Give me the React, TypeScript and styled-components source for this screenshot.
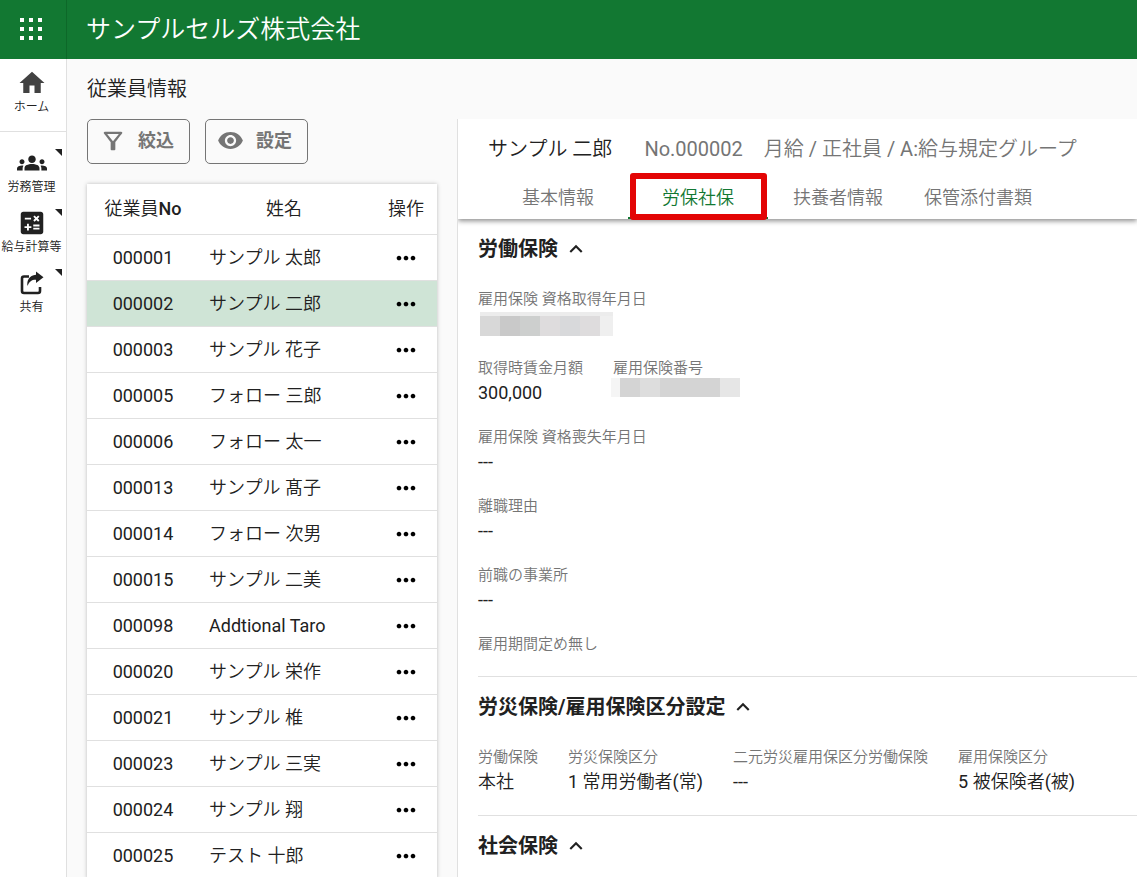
import React from "react";
import styled, { createGlobalStyle } from "styled-components";
import {
  MdCalculate,
  MdGroups,
  MdHome,
  MdKeyboardArrowUp,
  MdMoreHoriz,
  MdOutlineFilterAlt,
  MdVisibility,
} from "react-icons/md";

const green = "#127832";
const ink = "#212121";
const muted = "#757575";
const line = "#e0e0e0";
const boldFont = `Roboto, "Noto Sans CJK JP", sans-serif`;

const GlobalStyle = createGlobalStyle`
  * { box-sizing: border-box; }
  body {
    margin: 0;
    background: #fafafa;
    color: ${ink};
    font-family: Roboto, "Noto Sans CJK JP DemiLight", "Noto Sans CJK JP Light", "Noto Sans CJK JP", sans-serif;
    font-size: 18px;
    line-height: 24px;
  }
  button { font: inherit; color: inherit; background: none; border: 0; padding: 0; cursor: pointer; }
  h1, h2, h3, dl, dd, p { margin: 0; font-weight: 400; }
`;

const Shell = styled.div`
  display: flex;
  flex-direction: column;
  height: 100vh;
  overflow: hidden;
`;

const TopBar = styled.header`
  display: flex;
  flex: none;
  height: 59px;
  background: ${green};
  color: #fff;
`;

const AppsButton = styled.button`
  display: flex;
  align-items: center;
  justify-content: center;
  width: 67px;
  padding: 0 4px 1px 0;
  border-right: 1px solid #0d6829;
`;

const Company = styled.h1`
  padding-left: 19px;
  font-size: 25px;
  line-height: 59px;
`;

const Body = styled.div`
  display: flex;
  flex: 1;
  min-height: 0;
`;

const Rail = styled.nav`
  flex: none;
  width: 67px;
  background: #fff;
  border-right: 1px solid ${line};
`;

const RailGroup = styled.div`
  padding-top: 9px;
  & + & {
    padding-top: 16px;
    border-top: 1px solid ${line};
  }
  &:first-child {
    height: 72px;
  }
`;

const RailItem = styled.button`
  position: relative;
  display: flex;
  flex-direction: column;
  align-items: center;
  width: 100%;
  height: 60px;
  padding-right: 3px;
  font-size: 12px;
  line-height: 18px;
  white-space: nowrap;
`;

const Corner = styled.span`
  position: absolute;
  top: 1px;
  right: 4px;
  border-top: 7px solid ${ink};
  border-left: 7px solid transparent;
`;

const ListPane = styled.main`
  flex: none;
  width: 390px;
  padding: 16px 20px 0;
`;

const PageTitle = styled.h2`
  font-size: 20px;
  line-height: 28px;
`;

const Actions = styled.div`
  display: flex;
  gap: 15px;
  margin: 16px 0 20px;
`;

const ActionButton = styled.button`
  display: flex;
  align-items: center;
  justify-content: space-between;
  width: 103px;
  height: 45px;
  padding: 0 15px 2px 11px;
  border: 1px solid ${muted};
  border-radius: 5px;
  color: ${muted};
  font-family: ${boldFont};
  font-weight: 700;
`;

const Table = styled.table`
  width: 100%;
  table-layout: fixed;
  border-collapse: separate;
  border-spacing: 0;
  background: #fff;
  box-shadow: 0 0 4px rgba(0, 0, 0, 0.25);
`;

const HeadCell = styled.th<{ $width?: number; $indent?: number }>`
  width: ${(p) => (p.$width ? `${p.$width}px` : "auto")};
  height: 51px;
  padding: 0 0 0 ${(p) => p.$indent ?? 0}px;
  border-bottom: 1px solid ${line};
  font-weight: 400;
  b { font-weight: 500; }
`;

const Row = styled.tr<{ $selected: boolean }>`
  background: ${(p) => (p.$selected ? "#cfe4d6" : "#fff")};
`;

const Cell = styled.td<{ $align?: string; $indent?: number }>`
  height: 46px;
  padding: 0 0 0 ${(p) => p.$indent ?? 0}px;
  border-bottom: 1px solid ${line};
  text-align: ${(p) => p.$align ?? "left"};
`;

const RowMenu = styled.button`
  display: block;
  width: 28px;
  height: 28px;
  margin: 0 auto;
  color: #000;
  svg { display: block; }
`;

const Detail = styled.section`
  flex: 1;
  min-width: 0;
  margin-top: 60px;
  background: #fff;
  border-left: 1px solid ${line};
`;

const DetailHead = styled.header`
  height: 100px;
  padding-left: 30px;
  box-shadow: 0 2px 5px rgba(0, 0, 0, 0.45);
  clip-path: inset(0 0 -12px 0);
`;

const Person = styled.div`
  display: flex;
  gap: 21px;
  padding: 15px 0 11px;
  font-size: 20px;
  line-height: 30px;
  white-space: nowrap;
  color: ${muted};
`;

const PersonName = styled.h2`
  margin-right: 11px;
  font-size: 20px;
  color: ${ink};
`;

const Tabs = styled.div`
  display: flex;
`;

const Tab = styled.button<{ $active: boolean }>`
  position: relative;
  width: 140px;
  height: 44px;
  padding-top: 4px;
  border-bottom: 2px solid ${(p) => (p.$active ? green : "transparent")};
  color: ${(p) => (p.$active ? green : muted)};
  white-space: nowrap;
`;

const Highlight = styled.span`
  position: absolute;
  inset: -2px 1px -3px 2px;
  border: 6px solid #e30505;
  border-radius: 3px;
`;

const Sections = styled.div`
  padding-left: 20px;
`;

const Section = styled.section`
  padding: 15px 0 21px;
  & + & {
    border-top: 1px solid ${line};
  }
`;

const SectionTitle = styled.h3`
  margin-bottom: 24px;
  font-size: 20px;
  line-height: 30px;
`;

const Toggle = styled.button`
  display: flex;
  align-items: center;
  gap: 5px;
  font-family: ${boldFont};
  font-weight: 700;
`;

const Fields = styled.dl`
  display: flex;
  gap: 30px;
  & + & {
    margin-top: 21px;
  }
`;

const Label = styled.dt`
  font-size: 15px;
  line-height: 22px;
  color: ${muted};
  white-space: nowrap;
`;

const Value = styled.dd`
  height: 24px;
  margin-top: 2px;
  white-space: nowrap;
`;

const Mosaic = styled.span<{ $low?: boolean }>`
  display: flex;
  width: max-content;
  height: ${(p) => (p.$low ? 19 : 24)}px;
  margin: ${(p) => (p.$low ? "-3px 0 0 -2px" : "0 0 0 2px")};
  border-top: ${(p) => (p.$low ? "0" : "4px solid #ececec")};
`;

const Block = styled.span<{ $tone: string; $width: number }>`
  width: ${(p) => p.$width}px;
  background: ${(p) => p.$tone};
`;

const AppsIcon = () => (
  <svg width="22" height="22" viewBox="0 0 22 22" fill="currentColor" aria-hidden="true">
    {[0, 9, 18].map((y) => [0, 9, 18].map((x) => <rect key={`${x}-${y}`} x={x} y={y} width="4" height="4" />))}
  </svg>
);

const ShareIcon = () => (
  <svg width="30" height="30" viewBox="0 0 30 30" aria-hidden="true">
    <path
      d="M12 8.500H7A2 2 0 0 0 5 10.500v12.500A2 2 0 0 0 7 25h14a2 2 0 0 0 2-2v-4"
      fill="none"
      stroke="currentColor"
      strokeWidth="2.600"
    />
    <path d="M19 3.500l7.500 5.700-7.500 5.800v-3.200c-4-.2-6.500 1.500-8.500 6.200-1-5 1.500-10.800 8.500-11.300z" fill="currentColor" />
  </svg>
);

const employees = [
  ["000001", "サンプル 太郎"],
  ["000002", "サンプル 二郎"],
  ["000003", "サンプル 花子"],
  ["000005", "フォロー 三郎"],
  ["000006", "フォロー 太一"],
  ["000013", "サンプル 髙子"],
  ["000014", "フォロー 次男"],
  ["000015", "サンプル 二美"],
  ["000098", "Addtional Taro"],
  ["000020", "サンプル 栄作"],
  ["000021", "サンプル 椎"],
  ["000023", "サンプル 三実"],
  ["000024", "サンプル 翔"],
  ["000025", "テスト 十郎"],
];

const tabs = ["基本情報", "労保社保", "扶養者情報", "保管添付書類"];

const dateBlocks: [string, number][] = [
  ["#d8d8d8", 20], ["#c9c9c9", 20], ["#cdcfce", 20], ["#dedcdd", 20],
  ["#d8d9db", 20], ["#dedcdd", 20], ["#efefef", 13],
];
const numberBlocks: [string, number][] = [
  ["#f5f5f5", 9], ["#d4d4d4", 20], ["#dddddd", 20], ["#d4d4d4", 60], ["#e6e6e6", 20],
];

const Masked = ({ blocks, low }: { blocks: [string, number][]; low?: boolean }) => (
  <Mosaic $low={low}>
    {blocks.map(([tone, width], i) => (
      <Block key={i} $tone={tone} $width={width} />
    ))}
  </Mosaic>
);

const Field = ({ label, children }: { label: string; children?: React.ReactNode }) => (
  <div>
    <Label>{label}</Label>
    {children && <Value>{children}</Value>}
  </div>
);

const Heading = ({ children }: { children: React.ReactNode }) => (
  <SectionTitle>
    <Toggle aria-expanded="true">
      {children}
      <MdKeyboardArrowUp size={26} />
    </Toggle>
  </SectionTitle>
);

export default function App() {
  return (
    <Shell>
      <GlobalStyle />
      <TopBar>
        <AppsButton aria-label="アプリ一覧">
          <AppsIcon />
        </AppsButton>
        <Company>サンプルセルズ株式会社</Company>
      </TopBar>
      <Body>
        <Rail>
          <RailGroup>
            <RailItem>
              <MdHome size={30} color="#424242" />
              ホーム
            </RailItem>
          </RailGroup>
          <RailGroup>
            <RailItem>
              <MdGroups size={30} />
              労務管理
              <Corner />
            </RailItem>
            <RailItem>
              <MdCalculate size={30} />
              給与計算等
              <Corner />
            </RailItem>
            <RailItem>
              <ShareIcon />
              共有
              <Corner />
            </RailItem>
          </RailGroup>
        </Rail>
        <ListPane>
          <PageTitle>従業員情報</PageTitle>
          <Actions>
            <ActionButton>
              <MdOutlineFilterAlt size={28} />
              絞込
            </ActionButton>
            <ActionButton>
              <MdVisibility size={27} />
              設定
            </ActionButton>
          </Actions>
          <Table>
            <thead>
              <tr>
                <HeadCell $width={106} $indent={6}>従業員<b>No</b></HeadCell>
                <HeadCell>姓名</HeadCell>
                <HeadCell $width={62}>操作</HeadCell>
              </tr>
            </thead>
            <tbody>
              {employees.map(([no, name]) => (
                <Row key={no} $selected={no === "000002"}>
                  <Cell $align="center" $indent={6}>{no}</Cell>
                  <Cell $indent={16}>{name}</Cell>
                  <Cell>
                    <RowMenu aria-label={`${name} の操作`}>
                      <MdMoreHoriz size={28} />
                    </RowMenu>
                  </Cell>
                </Row>
              ))}
            </tbody>
          </Table>
        </ListPane>
        <Detail>
          <DetailHead>
            <Person>
              <PersonName>サンプル 二郎</PersonName>
              <span>No.000002</span>
              <span>月給 / 正社員 / A:給与規定グループ</span>
            </Person>
            <Tabs role="tablist">
              {tabs.map((tab, i) => (
                <Tab key={tab} role="tab" aria-selected={i === 1} $active={i === 1}>
                  {tab}
                  {i === 1 && <Highlight />}
                </Tab>
              ))}
            </Tabs>
          </DetailHead>
          <Sections>
            <Section>
              <Heading>労働保険</Heading>
              <Fields>
                <Field label="雇用保険 資格取得年月日"><Masked blocks={dateBlocks} /></Field>
              </Fields>
              <Fields>
                <Field label="取得時賃金月額">300,000</Field>
                <Field label="雇用保険番号"><Masked blocks={numberBlocks} low /></Field>
              </Fields>
              <Fields><Field label="雇用保険 資格喪失年月日">---</Field></Fields>
              <Fields><Field label="離職理由">---</Field></Fields>
              <Fields><Field label="前職の事業所">---</Field></Fields>
              <Fields><Field label="雇用期間定め無し" /></Fields>
            </Section>
            <Section>
              <Heading>労災保険/雇用保険区分設定</Heading>
              <Fields>
                <Field label="労働保険">本社</Field>
                <Field label="労災保険区分">1 常用労働者(常)</Field>
                <Field label="二元労災雇用保区分労働保険">---</Field>
                <Field label="雇用保険区分">5 被保険者(被)</Field>
              </Fields>
            </Section>
            <Section>
              <Heading>社会保険</Heading>
            </Section>
          </Sections>
        </Detail>
      </Body>
    </Shell>
  );
}
